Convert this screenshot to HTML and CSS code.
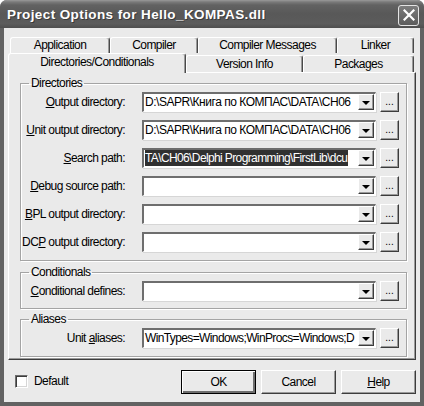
FILE: index.html
```html
<!DOCTYPE html>
<html>
<head>
<meta charset="utf-8">
<title>Project Options</title>
<link rel="stylesheet" href="styles.css">
</head>
<body>
<div class="window">
  <div class="titlebar">
    <span class="title">Project Options for Hello_KOMPAS.dll</span>
    <span class="close">
      <svg width="12" height="12" viewBox="0 0 12 12"><path d="M1.5 1.5 L10.5 10.5 M10.5 1.5 L1.5 10.5" stroke="#fff" stroke-width="2.2" stroke-linecap="square"/></svg>
    </span>
  </div>
  <div class="client">
    <div class="tabs">
      <div class="tabrow row1">
        <div class="tab t-app">Application</div>
        <div class="tab t-comp">Compiler</div>
        <div class="tab t-msg">Compiler Messages</div>
        <div class="tab t-link">Linker</div>
      </div>
      <div class="tabrow row2">
        <div class="tab sel t-dir">Directories/Conditionals</div>
        <div class="tab t-ver">Version Info</div>
        <div class="tab t-pkg">Packages</div>
      </div>
    </div>
    <div class="panel">
      <fieldset class="group g-dirs">
        <legend>Directories</legend>
        <div class="field">
          <label><u>O</u>utput directory:</label>
          <div class="combo"><span class="value">D:\SAPR\Книга по КОМПАС\DATA\CH06</span><span class="drop"><span class="arrow"></span></span></div>
          <button class="dots">...</button>
        </div>
        <div class="field">
          <label><u>U</u>nit output directory:</label>
          <div class="combo"><span class="value">D:\SAPR\Книга по КОМПАС\DATA\CH06</span><span class="drop"><span class="arrow"></span></span></div>
          <button class="dots">...</button>
        </div>
        <div class="field">
          <label><u>S</u>earch path:</label>
          <div class="combo"><span class="value tight"><span class="selected">TA\CH06\Delphi Programming\FirstLib\dcu</span></span><span class="drop"><span class="arrow"></span></span></div>
          <button class="dots">...</button>
        </div>
        <div class="field">
          <label><u>D</u>ebug source path:</label>
          <div class="combo"><span class="value"></span><span class="drop"><span class="arrow"></span></span></div>
          <button class="dots">...</button>
        </div>
        <div class="field">
          <label><u>B</u>PL output directory:</label>
          <div class="combo"><span class="value"></span><span class="drop"><span class="arrow"></span></span></div>
          <button class="dots">...</button>
        </div>
        <div class="field">
          <label>DC<u>P</u> output directory:</label>
          <div class="combo"><span class="value"></span><span class="drop"><span class="arrow"></span></span></div>
          <button class="dots">...</button>
        </div>
      </fieldset>
      <fieldset class="group g-cond">
        <legend>Conditionals</legend>
        <div class="field">
          <label><u>C</u>onditional defines:</label>
          <div class="combo"><span class="value"></span><span class="drop"><span class="arrow"></span></span></div>
          <button class="dots">...</button>
        </div>
      </fieldset>
      <fieldset class="group g-alias">
        <legend>Aliases</legend>
        <div class="field">
          <label>Unit <u>a</u>liases:</label>
          <div class="combo"><span class="value tight">WinTypes=Windows;WinProcs=Windows;D</span><span class="drop"><span class="arrow"></span></span></div>
          <button class="dots">...</button>
        </div>
      </fieldset>
    </div>
    <div class="footer">
      <div class="check"><span class="box"></span><span>Default</span></div>
      <div class="buttons">
        <button class="btn default">OK</button>
        <button class="btn">Cancel</button>
        <button class="btn"><u>H</u>elp</button>
      </div>
    </div>
  </div>
</div>
</body>
</html>
```

FILE: styles.css
```css
html, body {
  margin: 0;
  padding: 0;
  background: #ffffff;
}

body {
  font-family: "Liberation Sans", Arial, sans-serif;
  font-size: 12px;
  letter-spacing: -0.55px;
  color: #000;
}

.window {
  width: 424px;
  height: 406px;
  display: flex;
  flex-direction: column;
  background: #626262;
  border-radius: 7px 7px 0 0;
  overflow: hidden;
}

.titlebar {
  flex: none;
  height: 28px;
  display: flex;
  align-items: center;
  padding: 0 5px 0 7px;
  background: linear-gradient(#9a9a9a 0, #7a7a7a 2px, #626262 5px, #585858 50%, #5c5c5c 85%, #4e4e4e 100%);
}

.title {
  flex: 1;
  color: #fff;
  font-weight: bold;
  font-size: 13.5px;
  letter-spacing: 0.4px;
  text-shadow: 1px 1px 0 #3a3a3a;
  padding-top: 1px;
}

.close {
  width: 19px;
  height: 19px;
  border: 1px solid #e4e4e4;
  border-radius: 3px;
  background: linear-gradient(#7c7c7c, #5c5c5c);
  display: flex;
  align-items: center;
  justify-content: center;
  margin-top: 2px;
}

.client {
  flex: 1;
  margin: 0 4px 4px 4px;
  background: #eaeaea;
  display: flex;
  flex-direction: column;
}

/* tabs */
.tabs {
  padding-top: 9px;
}

.tabrow {
  display: flex;
}

.row1 {
  margin-left: 6px;
  height: 16px;
}

.row2 {
  margin-left: 4px;
  height: 19px;
  align-items: flex-end;
}

.tab {
  box-sizing: border-box;
  height: 16px;
  border-top: 1px solid #ffffff;
  border-left: 1px solid #ffffff;
  border-right: 1px solid #4a4a4a;
  border-radius: 3px 3px 0 0;
  box-shadow: inset -1px 0 0 #9a9a9a;
  text-align: center;
  line-height: 15px;
  background: #eaeaea;
}

.row2 .tab {
  height: 17px;
  line-height: 16px;
}

.row2 .tab.sel {
  height: 20px;
  margin-bottom: -1px;
  position: relative;
  z-index: 2;
  line-height: 17px;
}

.t-app { width: 100px; }
.t-comp { width: 88px; }
.t-msg { width: 139px; }
.t-link { width: 77px; }
.t-dir { width: 178px; }
.t-ver { width: 117px; }
.t-pkg { width: 111px; }

/* panel */
.panel {
  box-sizing: border-box;
  margin-left: 4px;
  width: 408px;
  height: 288px;
  border-top: 1px solid #ffffff;
  border-left: 1px solid #ffffff;
  border-right: 1px solid #3c3c3c;
  border-bottom: 1px solid #3c3c3c;
  box-shadow: inset -1px -1px 0 #9a9a9a;
  padding: 3px 8px 0 11px;
  position: relative;
  z-index: 1;
}

.group {
  margin: 0;
  padding: 0 6px 0 0;
  border: 1px solid #a4a4a4;
  box-shadow: 1px 1px 0 #ffffff, inset 1px 1px 0 #ffffff;
  min-width: 0;
}

.group legend {
  margin-left: 8px;
  padding: 0 2px;
  line-height: 14px;
}

.g-dirs {
  padding-top: 2px;
  padding-bottom: 8px;
}

.g-cond {
  margin-top: 4px;
  padding-top: 2px;
  padding-bottom: 7px;
}

.g-alias {
  margin-top: 3px;
  padding-top: 2px;
  padding-bottom: 8px;
}

.field {
  display: flex;
  align-items: center;
  height: 20px;
}

.g-dirs .field + .field {
  margin-top: 8px;
}

.field label {
  width: 104px;
  margin-right: 17px;
  text-align: right;
  white-space: nowrap;
}

.combo {
  box-sizing: border-box;
  width: 234px;
  height: 20px;
  background: #ffffff;
  border-top: 2px solid #6e6e6e;
  border-left: 2px solid #6e6e6e;
  border-right: 1px solid #ffffff;
  border-bottom: 1px solid #ffffff;
  box-shadow: 1px 1px 0 #d6d6d6;
  display: flex;
  align-items: stretch;
}

.value {
  flex: 1;
  overflow: hidden;
  white-space: nowrap;
  padding-left: 1px;
  line-height: 17px;
  letter-spacing: -0.47px;
}

.value.tight {
  letter-spacing: -0.62px;
}

.selected {
  background: #303030;
  color: #ffffff;
  padding: 0 1px 0 0;
  display: inline-block;
  line-height: 16px;
}

.drop {
  flex: none;
  box-sizing: border-box;
  width: 16px;
  height: 16px;
  margin: 0 1px 0 1px;
  background: #eaeaea;
  border-top: 1px solid #ffffff;
  border-left: 1px solid #ffffff;
  border-right: 1px solid #3c3c3c;
  border-bottom: 1px solid #3c3c3c;
  box-shadow: inset -1px -1px 0 #9a9a9a;
  display: flex;
  align-items: center;
  justify-content: center;
}

.arrow {
  width: 0;
  height: 0;
  border-left: 4px solid transparent;
  border-right: 4px solid transparent;
  border-top: 4px solid #000000;
  margin-top: 1px;
}

.dots {
  box-sizing: border-box;
  width: 19px;
  height: 20px;
  margin: 0 0 0 4px;
  padding: 0 0 3px 0;
  font-family: inherit;
  font-size: 10px;
  letter-spacing: 0;
  line-height: 12px;
  color: #000;
  background: #eaeaea;
  border-top: 1px solid #ffffff;
  border-left: 1px solid #ffffff;
  border-right: 1px solid #3c3c3c;
  border-bottom: 1px solid #3c3c3c;
  box-shadow: inset -1px -1px 0 #9a9a9a;
  display: flex;
  align-items: flex-end;
  justify-content: center;
}

/* footer */
.footer {
  flex: 1;
  display: flex;
  align-items: center;
  padding: 0 0 0 11px;
}

.check {
  display: flex;
  align-items: center;
  gap: 6px;
}

.box {
  box-sizing: border-box;
  width: 13px;
  height: 13px;
  background: #ffffff;
  border-top: 1px solid #6e6e6e;
  border-left: 1px solid #6e6e6e;
  border-right: 1px solid #ffffff;
  border-bottom: 1px solid #ffffff;
  box-shadow: inset 1px 1px 0 #3c3c3c, inset -1px -1px 0 #d6d6d6;
}

.buttons {
  margin-left: auto;
  display: flex;
  gap: 5px;
  margin-top: 2px;
  margin-right: 4px;
}

.btn {
  box-sizing: border-box;
  width: 75px;
  height: 24px;
  padding: 0;
  font-family: inherit;
  font-size: 12px;
  letter-spacing: -0.55px;
  color: #000;
  background: #eaeaea;
  border-top: 1px solid #ffffff;
  border-left: 1px solid #ffffff;
  border-right: 1px solid #3c3c3c;
  border-bottom: 1px solid #3c3c3c;
  box-shadow: inset -1px -1px 0 #9a9a9a;
}

.btn.default {
  border: 1px solid #000000;
  box-shadow: inset 1px 1px 0 #ffffff, inset -2px -2px 0 #6e6e6e;
}
```
